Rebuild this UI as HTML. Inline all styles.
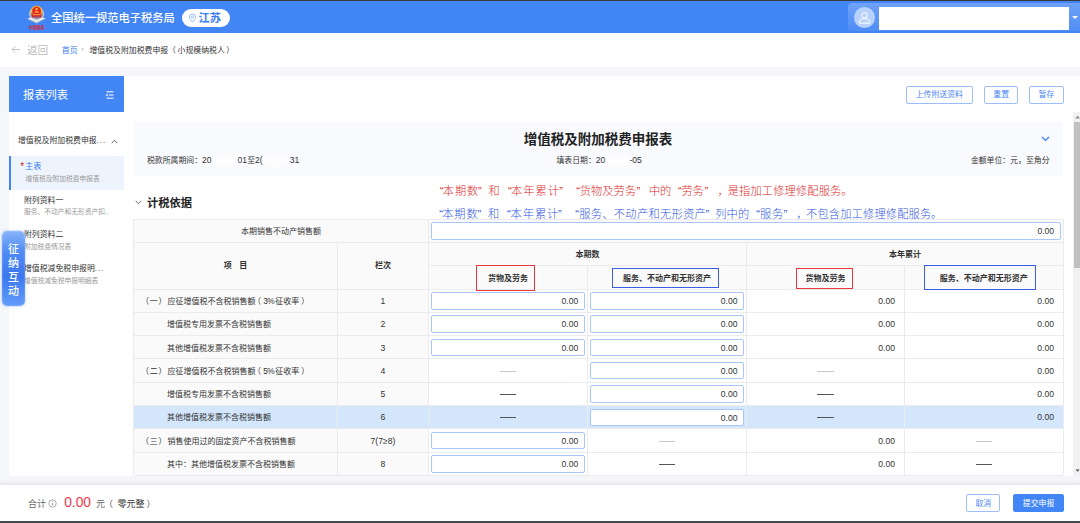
<!DOCTYPE html>
<html lang="zh-CN">
<head>
<meta charset="utf-8">
<title>增值税及附加税费申报（小规模纳税人）</title>
<style>
*{box-sizing:border-box;margin:0;padding:0}
html,body{width:1080px;height:523px;overflow:hidden;background:#f5f6f9;font-family:"Liberation Sans","Noto Sans CJK SC",sans-serif;color:#333;}
.abs{position:absolute}
#topline{left:0;top:0;width:1080px;height:1px;background:#3a3a3a}
#header{left:0;top:1px;width:1080px;height:31.6px;background:#4285f4}
#title{left:51px;top:9.8px;font-size:11.25px;line-height:17px;color:#fff;font-weight:500;white-space:nowrap}
#pill{left:182px;top:9px;width:48px;height:18px;border-radius:9px;background:#fff}
#pill span{position:absolute;left:16.5px;top:0.6px;line-height:17.5px;font-size:11.25px;color:#3b7cf0;font-weight:700}
#userbox{left:847.5px;top:3px;width:233px;height:28px;background:linear-gradient(180deg,#6fa2f7,#4f8df5);border-radius:4px 0 0 4px}
#avatar{left:854px;top:7px;width:21px;height:21px;border-radius:50%;background:#b8d2fb}
#redact{left:879px;top:7.2px;width:190px;height:22.5px;background:#fff}
#caret{left:1072px;top:15.5px;width:0;height:0;border-left:3px solid transparent;border-right:3px solid transparent;border-top:3.5px solid #fff}
#crumb{left:0;top:32.6px;width:1080px;height:34.4px;background:#fff}
#crumb .t{position:absolute;white-space:nowrap;line-height:12px}

#card{left:9px;top:76px;width:1071px;height:400px;background:#fff}
#sbhead{left:9px;top:76px;width:115px;height:36px;background:#4285f4}
#sbhead span{position:absolute;left:14px;top:11px;font-size:11.25px;line-height:16px;color:#fff;white-space:nowrap}
.btn{position:absolute;height:17.5px;border:1px solid #9dbdf9;border-radius:2px;background:#fff;color:#4c87f3;font-size:7.875px;line-height:16.8px;text-align:center;white-space:nowrap}
#sidebar .t{position:absolute;white-space:nowrap;line-height:10px}
#sidebar .m{font-size:7.875px;color:#333}
#sidebar .s{font-size:6.75px;color:#9a9a9a}
#active{left:9px;top:156px;width:115px;height:33.7px;background:#eef4fe;border-left:2px solid #4285f4}
#float{left:1.6px;top:231px;width:23.6px;height:74.8px;border-radius:5px;background:linear-gradient(180deg,#86b4fa 0%,#4f8af5 28%,#3b78f0 60%,#629bf7 100%);box-shadow:inset 0 0 2px rgba(255,255,255,.45),0 0 2.5px rgba(66,133,244,.6);color:#fff;font-weight:500;font-size:11px;line-height:14.1px;text-align:center;padding-top:10.6px}
#info{left:133.5px;top:121.6px;width:929.8px;height:54px;background:#f9fafe}
#info .t{position:absolute;white-space:nowrap;font-size:7.875px;line-height:10px;color:#333}
#h1{left:134px;top:131px;width:928px;text-align:center;font-size:13.5px;line-height:18px;font-weight:700;color:#222;white-space:nowrap}
#sec{left:147px;top:195px;font-size:11.25px;line-height:16px;font-weight:700;color:#222;white-space:nowrap}
.note{position:absolute;left:0;width:1080px;height:16px;font-size:11.25px;line-height:16px;font-weight:300}
.note span{position:absolute;top:0;white-space:nowrap}
#tblwrap{left:133.5px;top:219px;width:929px;height:257px;overflow:hidden}
#footer{left:0;top:484.5px;width:1080px;height:36.5px;background:#fff;box-shadow:0 -1px 4px rgba(0,0,0,.10)}
#botline{left:0;top:520.6px;width:1080px;height:2.4px;background:#46474a}
#scroll{left:1073px;top:112px;width:7px;height:364px;background:#f1f1f1}
#thumb{left:1074px;top:122px;width:6px;height:146px;background:#c1c1c1}

.c{position:absolute;font-size:8px;line-height:25.2px;color:#333;white-space:nowrap;overflow:hidden}
.c.ctr{text-align:center}
.c.b{font-weight:700;color:#333}
.c.val{text-align:right;padding-right:9.3px}
.num,.inp,.n{font-family:"Liberation Sans",sans-serif;font-size:8.6px}
.inp{position:absolute;left:2.4px;right:2.6px;top:3.1px;height:17.5px;border:1px solid #a9c6fa;border-radius:2px;background:#fff;text-align:right;padding-right:5.6px;line-height:16.6px;font-size:8.6px;color:#333}
.dash{display:inline-block;width:16.5px;height:1px;vertical-align:middle;position:relative;top:-0.5px}
.ln{position:absolute;background:#ebebed}
.box{position:absolute;border-style:solid;border-width:1.5px}
.blob{position:absolute;background:#fff;opacity:.75;border-radius:5px;filter:blur(1.5px)}
</style>
</head>
<body>
<div id="topline" class="abs"></div>
<div id="header" class="abs"></div>
<svg class="abs" style="left:22px;top:2px" width="30" height="30" viewBox="0 0 30 30">
<ellipse cx="14.6" cy="11.8" rx="7" ry="6" fill="#8f9bb3" stroke="#c3c8d1" stroke-width="1.3"/>
<path d="M5.6 16.8L8.4 15.4L14.6 18.2L20.8 15.4L23.4 16.6L14.6 21Z" fill="#f1f1f1" stroke="#c8c8c8" stroke-width="0.3"/>
<path d="M7.5 17.2L14.6 20.2L21.7 17.2" fill="none" stroke="#aaa" stroke-width="0.4"/>
<circle cx="14.6" cy="9.3" r="5.7" fill="#f5c21b"/>
<circle cx="14.6" cy="9.1" r="4.5" fill="#e6252a"/>
<rect x="9.6" y="11.2" width="10" height="4.2" rx="1" fill="#de2c2c"/>
<rect x="10.6" y="12.3" width="8" height="0.8" fill="#f3b730"/>
<rect x="11.4" y="14" width="6.4" height="0.8" fill="#7a4aa0" opacity=".7"/>
<path d="M14.6 5.4l.5 1.1 1.1.1-.8.8.2 1.1-1-.6-1 .6.2-1.1-.8-.8 1.1-.1z" fill="#f8d23a"/>
<rect x="12.6" y="9.3" width="4" height="1.3" fill="#f3b730"/>
<text x="6.8" y="27.4" font-size="4.6" font-weight="700" fill="#d6262e" textLength="15.6" lengthAdjust="spacingAndGlyphs" font-family="'Liberation Sans','Noto Sans CJK SC',sans-serif">中国税务</text>
</svg>
<div id="title" class="abs">全国统一规范电子税务局</div>
<div id="pill" class="abs"><span>江苏</span></div>
<svg class="abs" style="left:187.5px;top:12.5px" width="9" height="11" viewBox="0 0 9 11"><path d="M4.5 9.3C3.2 7.6 1.4 5.8 1.4 4.1A3.1 3.1 0 0 1 7.6 4.1C7.6 5.8 5.8 7.6 4.5 9.3Z" fill="none" stroke="#5e94f5" stroke-width="0.6"/><circle cx="4.5" cy="4" r="1.1" fill="none" stroke="#5e94f5" stroke-width="0.55"/></svg>
<div id="userbox" class="abs"></div>
<div id="avatar" class="abs"></div>
<svg class="abs" style="left:854px;top:7px" width="21" height="21" viewBox="0 0 21 21"><circle cx="10.5" cy="8.3" r="2.7" fill="none" stroke="#fff" stroke-width="1"/><path d="M5.4 16.2V15.2C5.4 12.6 8 11.6 10.5 11.6S15.6 12.6 15.6 15.2V16.2Z" fill="none" stroke="#fff" stroke-width="1" stroke-linejoin="round"/></svg>
<div id="redact" class="abs"></div>
<div id="caret" class="abs"></div>
<div id="crumb" class="abs">
  <div class="t" style="left:27px;top:11px;font-size:10.6px;color:#bcbcbc">返回</div>
  <div class="t" style="left:61.8px;top:12.1px;font-size:7.875px;color:#3b7cf0">首页</div>
  <div class="t" style="left:81.6px;top:11.6px;font-size:7px;color:#aaa">›</div>
  <div class="t" style="left:89.5px;top:12.1px;font-size:7.875px;color:#333">增值税及附加税费申报<span style="margin-right:1.6px">（</span>小规模纳税人<span style="margin-left:1.6px">）</span></div>
</div>

<div id="card" class="abs"></div>
<div id="sbhead" class="abs"><span>报表列表</span>
<svg class="abs" style="left:96.3px;top:15.2px" width="9" height="8" viewBox="0 0 9 8"><g stroke="#fff" stroke-width="1" fill="none"><path d="M1.5 0.8H8.5M4 4H8.5M1.5 7.2H8.5"/></g><path d="M2.6 2.4L0.6 4L2.6 5.6Z" fill="#fff"/></svg>
</div>
<div class="btn" style="left:906px;top:86px;width:66.7px">上传附送资料</div>
<div class="btn" style="left:984px;top:86px;width:34.3px">重置</div>
<div class="btn" style="left:1029px;top:86px;width:34.7px">暂存</div>
<div id="active" class="abs"></div>
<div id="sidebar">
  <div class="t m" style="left:18px;top:136px">增值税及附加税费申报<span style="letter-spacing:1px">...</span></div>
  <svg class="abs" style="left:110.5px;top:138.5px" width="7" height="5" viewBox="0 0 7 5"><path d="M0.7 4.2L3.5 1.2L6.3 4.2" stroke="#555" stroke-width="0.9" fill="none"/></svg>
  <div class="t m" style="left:20.3px;top:162.3px;font-size:10px;color:#e02020">*</div>
  <div class="t m" style="left:25px;top:162px;font-size:8.2px;color:#3b7cf0">主表</div>
  <div class="t s" style="left:25.5px;top:174px">增值税及附加税费申报表</div>
  <div class="t m" style="left:24px;top:195.5px">附列资料一</div>
  <div class="t s" style="left:24px;top:207.2px">服务、不动产和无形资产扣..</div>
  <div class="t m" style="left:24px;top:229.8px">附列资料二</div>
  <div class="t s" style="left:24px;top:241.5px">附加税费情况表</div>
  <div class="t m" style="left:24px;top:263.8px">增值税减免税申报明<span style="letter-spacing:1px">...</span></div>
  <div class="t s" style="left:24px;top:275.5px">增值税减免税申报明细表</div>
</div>
<div id="float" class="abs">征<br>纳<br>互<br>动</div>
<div id="info" class="abs">
  <div class="t" style="left:13.5px;top:33.7px">税款所属期间：<span class="n">20</span><span style="display:inline-block;width:26px"></span><span class="n">01</span>至<span class="n">2(</span><span style="display:inline-block;width:27px"></span><span class="n">31</span></div>
  <div class="t" style="left:423px;top:33.7px">填表日期：<span class="n">20</span><span style="display:inline-block;width:24px"></span><span class="n">-05</span></div>
  <div class="t" style="right:13.8px;top:34.2px">金额单位：元，至角分</div>
  <svg class="abs" style="left:907.3px;top:14px" width="9" height="6" viewBox="0 0 9 6"><path d="M1 1L4.5 4.4L8 1" stroke="#3b7cf0" stroke-width="1.3" fill="none"/></svg>
</div>
<div class="blob" style="left:214px;top:155px;width:23px;height:11px"></div>
<div class="blob" style="left:264px;top:155px;width:24px;height:11px"></div>
<div class="blob" style="left:606px;top:155px;width:22px;height:11px"></div>
<div id="h1" class="abs">增值税及附加税费申报表</div>
<svg class="abs" style="left:135px;top:199.8px" width="7" height="5" viewBox="0 0 7 5"><path d="M0.8 0.8L3.5 3.8L6.2 0.8" stroke="#666" stroke-width="0.9" fill="none"/></svg>
<div id="sec" class="abs">计税依据</div>
<div class="note" style="top:182.7px;color:#de2b2b">
<span style="left:439.80px">“</span>
<span style="left:442.75px;letter-spacing:0.92px">本期数</span>
<span style="left:477.90px">”</span>
<span style="left:488.50px">和</span>
<span style="left:508.00px">“</span>
<span style="left:511.05px;letter-spacing:1.03px">本年累计</span>
<span style="left:559.30px">”</span>
<span style="left:576.30px">“</span>
<span style="left:579.85px;letter-spacing:0.01px">货物及劳务</span>
<span style="left:636.60px">”</span>
<span style="left:648.95px;letter-spacing:-0.30px">中的</span>
<span style="left:677.90px">“</span>
<span style="left:681.55px;letter-spacing:-0.30px">劳务</span>
<span style="left:704.60px">”</span>
<span style="left:717.60px">，</span>
<span style="left:727.75px;letter-spacing:0.11px">是指加工修理修配服务</span>
<span style="left:841.30px">。</span>
</div>
<div class="note" style="top:206.2px;color:#3358e0">
<span style="left:439.20px">“</span>
<span style="left:442.15px;letter-spacing:0.92px">本期数</span>
<span style="left:477.50px">”</span>
<span style="left:488.00px">和</span>
<span style="left:507.00px">“</span>
<span style="left:510.45px;letter-spacing:0.97px">本年累计</span>
<span style="left:557.90px">”</span>
<span style="left:575.30px">“</span>
<span style="left:579.25px;letter-spacing:0.28px">服务、不动产和无形资产</span>
<span style="left:705.40px">”</span>
<span style="left:715.15px;letter-spacing:0.17px">列中的</span>
<span style="left:756.30px">“</span>
<span style="left:759.95px;letter-spacing:0.80px">服务</span>
<span style="left:783.40px">”</span>
<span style="left:796.30px">，</span>
<span style="left:806.05px;letter-spacing:0.14px">不包含加工修理修配服务</span>
<span style="left:930.80px">。</span>
</div>
<div id="table">
<div class="c ctr" style="left:133.50px;top:219.20px;width:294.80px;height:23.28px;background:#fafafa;">本期销售不动产销售额</div>
<div class="c " style="left:428.30px;top:219.20px;width:635.00px;height:23.28px;background:#fafafa;"><div class="inp">0.00</div></div>
<div class="c ctr b" style="left:133.50px;top:242.48px;width:204.20px;height:46.56px;background:#fafafa;line-height:47.8px;">项<span style="display:inline-block;width:7.5px"></span>目</div>
<div class="c ctr b" style="left:337.70px;top:242.48px;width:90.60px;height:46.56px;background:#fafafa;line-height:47.8px;">栏次</div>
<div class="c ctr b" style="left:428.30px;top:242.48px;width:318.40px;height:23.28px;background:#fafafa;line-height:26.4px;">本期数</div>
<div class="c ctr b" style="left:746.70px;top:242.48px;width:316.60px;height:23.28px;background:#fafafa;line-height:26.4px;">本年累计</div>
<div class="c ctr b" style="left:428.30px;top:265.76px;width:159.20px;height:23.28px;background:#fafafa;">货物及劳务</div>
<div class="c ctr b" style="left:587.50px;top:265.76px;width:159.20px;height:23.28px;background:#fafafa;">服务、不动产和无形资产</div>
<div class="c ctr b" style="left:746.70px;top:265.76px;width:157.60px;height:23.28px;background:#fafafa;">货物及劳务</div>
<div class="c ctr b" style="left:904.30px;top:265.76px;width:159.00px;height:23.28px;background:#fafafa;">服务、不动产和无形资产</div>
<div class="c lab" style="left:133.50px;top:289.04px;width:204.20px;height:23.28px;background:#fafafa;padding-left:9.5px;"><span style="margin-left:-2px;letter-spacing:.8px">（一）</span>应征增值税不含税销售额<span style="margin-left:-2.5px;margin-right:2.3px">（</span><span class="n" style="font-size:8.2px;letter-spacing:-.5px">3%</span><span style="margin-left:1.3px">征收率</span><span style="margin-left:2px">）</span></div>
<div class="c ctr num" style="left:337.70px;top:289.04px;width:90.60px;height:23.28px;background:#fafafa;">1</div>
<div class="c " style="left:428.30px;top:289.04px;width:159.20px;height:23.28px;background:#fff;"><div class="inp">0.00</div></div>
<div class="c " style="left:587.50px;top:289.04px;width:159.20px;height:23.28px;background:#fff;"><div class="inp">0.00</div></div>
<div class="c val num" style="left:746.70px;top:289.04px;width:157.60px;height:23.28px;background:#fff;">0.00</div>
<div class="c val num" style="left:904.30px;top:289.04px;width:159.00px;height:23.28px;background:#fff;">0.00</div>
<div class="c lab" style="left:133.50px;top:312.32px;width:204.20px;height:23.28px;background:#fafafa;padding-left:33.5px;">增值税专用发票不含税销售额</div>
<div class="c ctr num" style="left:337.70px;top:312.32px;width:90.60px;height:23.28px;background:#fafafa;">2</div>
<div class="c " style="left:428.30px;top:312.32px;width:159.20px;height:23.28px;background:#fff;"><div class="inp">0.00</div></div>
<div class="c " style="left:587.50px;top:312.32px;width:159.20px;height:23.28px;background:#fff;"><div class="inp">0.00</div></div>
<div class="c val num" style="left:746.70px;top:312.32px;width:157.60px;height:23.28px;background:#fff;">0.00</div>
<div class="c val num" style="left:904.30px;top:312.32px;width:159.00px;height:23.28px;background:#fff;">0.00</div>
<div class="c lab" style="left:133.50px;top:335.60px;width:204.20px;height:23.28px;background:#fafafa;padding-left:33.5px;">其他增值税发票不含税销售额</div>
<div class="c ctr num" style="left:337.70px;top:335.60px;width:90.60px;height:23.28px;background:#fafafa;">3</div>
<div class="c " style="left:428.30px;top:335.60px;width:159.20px;height:23.28px;background:#fff;"><div class="inp">0.00</div></div>
<div class="c " style="left:587.50px;top:335.60px;width:159.20px;height:23.28px;background:#fff;"><div class="inp">0.00</div></div>
<div class="c val num" style="left:746.70px;top:335.60px;width:157.60px;height:23.28px;background:#fff;">0.00</div>
<div class="c val num" style="left:904.30px;top:335.60px;width:159.00px;height:23.28px;background:#fff;">0.00</div>
<div class="c lab" style="left:133.50px;top:358.88px;width:204.20px;height:23.28px;background:#fafafa;padding-left:9.5px;"><span style="margin-left:-2px;letter-spacing:.8px">（二）</span>应征增值税不含税销售额<span style="margin-left:-2.5px;margin-right:2.3px">（</span><span class="n" style="font-size:8.2px;letter-spacing:-.5px">5%</span><span style="margin-left:1.3px">征收率</span><span style="margin-left:2px">）</span></div>
<div class="c ctr num" style="left:337.70px;top:358.88px;width:90.60px;height:23.28px;background:#fafafa;">4</div>
<div class="c ctr" style="left:428.30px;top:358.88px;width:159.20px;height:23.28px;background:#fff;"><span class="dash" style="background:#c8c8c8"></span></div>
<div class="c " style="left:587.50px;top:358.88px;width:159.20px;height:23.28px;background:#fff;"><div class="inp">0.00</div></div>
<div class="c ctr" style="left:746.70px;top:358.88px;width:157.60px;height:23.28px;background:#fff;"><span class="dash" style="background:#c8c8c8"></span></div>
<div class="c val num" style="left:904.30px;top:358.88px;width:159.00px;height:23.28px;background:#fff;">0.00</div>
<div class="c lab" style="left:133.50px;top:382.16px;width:204.20px;height:23.28px;background:#fafafa;padding-left:33.5px;">增值税专用发票不含税销售额</div>
<div class="c ctr num" style="left:337.70px;top:382.16px;width:90.60px;height:23.28px;background:#fafafa;">5</div>
<div class="c ctr" style="left:428.30px;top:382.16px;width:159.20px;height:23.28px;background:#fff;"><span class="dash" style="background:#555"></span></div>
<div class="c " style="left:587.50px;top:382.16px;width:159.20px;height:23.28px;background:#fff;"><div class="inp">0.00</div></div>
<div class="c ctr" style="left:746.70px;top:382.16px;width:157.60px;height:23.28px;background:#fff;"><span class="dash" style="background:#555"></span></div>
<div class="c val num" style="left:904.30px;top:382.16px;width:159.00px;height:23.28px;background:#fff;">0.00</div>
<div class="c lab" style="left:133.50px;top:405.44px;width:204.20px;height:23.28px;background:#d4e6fc;padding-left:33.5px;">其他增值税发票不含税销售额</div>
<div class="c ctr num" style="left:337.70px;top:405.44px;width:90.60px;height:23.28px;background:#d4e6fc;">6</div>
<div class="c ctr" style="left:428.30px;top:405.44px;width:159.20px;height:23.28px;background:#d4e6fc;"><span class="dash" style="background:#555"></span></div>
<div class="c " style="left:587.50px;top:405.44px;width:159.20px;height:23.28px;background:#d4e6fc;"><div class="inp">0.00</div></div>
<div class="c ctr" style="left:746.70px;top:405.44px;width:157.60px;height:23.28px;background:#d4e6fc;"><span class="dash" style="background:#555"></span></div>
<div class="c val num" style="left:904.30px;top:405.44px;width:159.00px;height:23.28px;background:#d4e6fc;">0.00</div>
<div class="c lab" style="left:133.50px;top:428.72px;width:204.20px;height:23.28px;background:#fafafa;padding-left:9.5px;"><span style="margin-left:-2px;letter-spacing:.8px">（三）</span>销售使用过的固定资产不含税销售额</div>
<div class="c ctr num" style="left:337.70px;top:428.72px;width:90.60px;height:23.28px;background:#fafafa;">7(7≥8)</div>
<div class="c " style="left:428.30px;top:428.72px;width:159.20px;height:23.28px;background:#fff;"><div class="inp">0.00</div></div>
<div class="c ctr" style="left:587.50px;top:428.72px;width:159.20px;height:23.28px;background:#fff;"><span class="dash" style="background:#c8c8c8"></span></div>
<div class="c val num" style="left:746.70px;top:428.72px;width:157.60px;height:23.28px;background:#fff;">0.00</div>
<div class="c ctr" style="left:904.30px;top:428.72px;width:159.00px;height:23.28px;background:#fff;"><span class="dash" style="background:#c8c8c8"></span></div>
<div class="c lab" style="left:133.50px;top:452.00px;width:204.20px;height:23.28px;background:#fafafa;padding-left:33.5px;">其中：其他增值税发票不含税销售额</div>
<div class="c ctr num" style="left:337.70px;top:452.00px;width:90.60px;height:23.28px;background:#fafafa;">8</div>
<div class="c " style="left:428.30px;top:452.00px;width:159.20px;height:23.28px;background:#fff;"><div class="inp">0.00</div></div>
<div class="c ctr" style="left:587.50px;top:452.00px;width:159.20px;height:23.28px;background:#fff;"><span class="dash" style="background:#555"></span></div>
<div class="c val num" style="left:746.70px;top:452.00px;width:157.60px;height:23.28px;background:#fff;">0.00</div>
<div class="c ctr" style="left:904.30px;top:452.00px;width:159.00px;height:23.28px;background:#fff;"><span class="dash" style="background:#555"></span></div>
<div class="ln" style="left:133.50px;top:218.70px;width:929.80px;height:1px"></div>
<div class="ln" style="left:133.50px;top:241.98px;width:929.80px;height:1px"></div>
<div class="ln" style="left:428.30px;top:265.26px;width:635.00px;height:1px"></div>
<div class="ln" style="left:133.50px;top:288.54px;width:929.80px;height:1px"></div>
<div class="ln" style="left:133.50px;top:311.82px;width:929.80px;height:1px"></div>
<div class="ln" style="left:133.50px;top:335.10px;width:929.80px;height:1px"></div>
<div class="ln" style="left:133.50px;top:358.38px;width:929.80px;height:1px"></div>
<div class="ln" style="left:133.50px;top:381.66px;width:929.80px;height:1px"></div>
<div class="ln" style="left:133.50px;top:404.94px;width:929.80px;height:1px"></div>
<div class="ln" style="left:133.50px;top:428.22px;width:929.80px;height:1px"></div>
<div class="ln" style="left:133.50px;top:451.50px;width:929.80px;height:1px"></div>
<div class="ln" style="left:133.50px;top:474.78px;width:929.80px;height:1px"></div>
<div class="ln" style="left:133.00px;top:219.20px;width:1px;height:256.08px"></div>
<div class="ln" style="left:1062.80px;top:219.20px;width:1px;height:256.08px"></div>
<div class="ln" style="left:427.80px;top:219.20px;width:1px;height:256.08px"></div>
<div class="ln" style="left:337.20px;top:242.48px;width:1px;height:232.80px"></div>
<div class="ln" style="left:746.20px;top:242.48px;width:1px;height:232.80px"></div>
<div class="ln" style="left:587.00px;top:265.76px;width:1px;height:209.52px"></div>
<div class="ln" style="left:903.80px;top:265.76px;width:1px;height:209.52px"></div>

<div class="box" style="left:476.3px;top:265.4px;width:58.7px;height:25.4px;border-color:#e8383e"></div>
<div class="box" style="left:612px;top:267.7px;width:106.7px;height:20px;border-color:#3a5fe6"></div>
<div class="box" style="left:796.3px;top:267.7px;width:56.4px;height:21.3px;border-color:#e8383e"></div>
<div class="box" style="left:924px;top:265px;width:111.7px;height:25px;border-color:#3a5fe6"></div>
</div>
<div id="scroll" class="abs"></div>
<div id="thumb" class="abs"></div>
<svg class="abs" style="left:1073px;top:112px" width="7" height="10" viewBox="0 0 7 10"><path d="M2.2 6.6L4.7 3.8L7.2 6.6Z" fill="#8a8a8a"/></svg>
<svg class="abs" style="left:1073px;top:466px" width="7" height="10" viewBox="0 0 7 10"><path d="M2.6 3.6L4.6 5.8L6.6 3.6Z" fill="#444"/></svg>
<div id="footer" class="abs">
  <div class="abs" style="left:28px;top:13px;font-size:9px;line-height:12px;color:#666;white-space:nowrap">合计</div>
  <svg class="abs" style="left:48.3px;top:14.6px" width="9" height="9" viewBox="0 0 9 9"><circle cx="4.5" cy="4.5" r="3.7" fill="none" stroke="#888" stroke-width="0.7"/><path d="M4.5 3.9V6.6M4.5 2.3V3.1" stroke="#888" stroke-width="0.8"/></svg>
  <div class="abs" style="left:64.2px;top:9.5px;font-size:13.8px;line-height:18px;color:#f5384a;white-space:nowrap;font-family:'Liberation Sans',sans-serif">0.00</div>
  <div class="abs" style="left:96px;top:13px;font-size:9px;line-height:12px;color:#666;white-space:nowrap">元</div>
  <div class="abs" style="left:104px;top:13px;font-size:9px;line-height:12px;color:#555;white-space:nowrap">（</div>
  <div class="abs" style="left:117.6px;top:13px;font-size:9px;line-height:12px;color:#333;white-space:nowrap">零元整</div>
  <div class="abs" style="left:146.6px;top:13px;font-size:9px;line-height:12px;color:#555;white-space:nowrap">）</div>
  <div class="btn" style="left:966.3px;top:9.5px;width:34px;height:18px;line-height:18.2px">取消</div>
  <div class="btn" style="left:1013.3px;top:9.5px;width:50.5px;height:18px;line-height:18.2px;background:#4285f4;border-color:#4285f4;color:#fff">提交申报</div>
</div>
<div id="botline" class="abs"></div>
<svg class="abs" style="left:10.8px;top:45.3px" width="10" height="9" viewBox="0 0 10 9"><path d="M9 4.5H1.2M4.4 1.2L1.1 4.5L4.4 7.8" fill="none" stroke="#bdbdbd" stroke-width="0.9"/></svg>
</body>
</html>
